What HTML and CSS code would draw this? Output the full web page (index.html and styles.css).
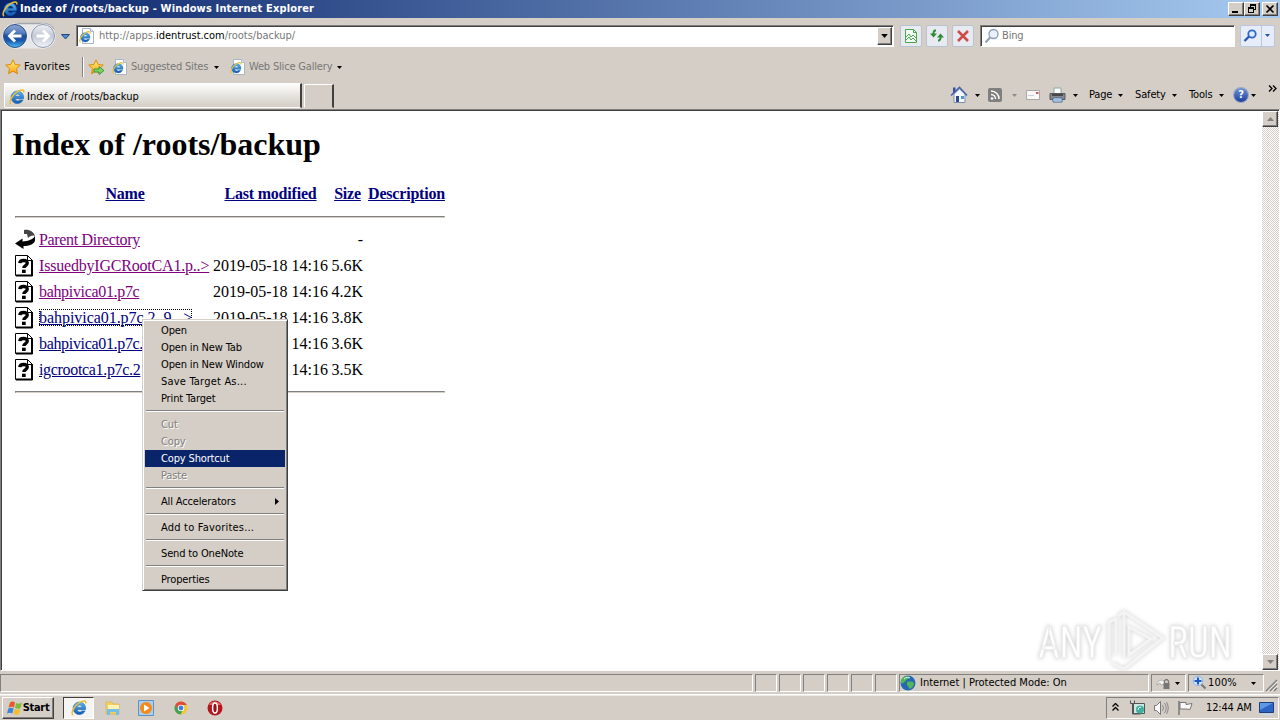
FILE: index.html
```html
<!DOCTYPE html>
<html>
  <head>
    <meta charset="UTF-8">
    <title>Index of /roots/backup</title>
    <link rel="stylesheet" href="styles.css">
  </head>
  <body>
    <svg class="defs" width="0" height="0">
      <defs>
        <linearGradient id="blue" x1="0" y1="0" x2="0" y2="1"><stop offset="0" stop-color="#5fb8f0"/><stop offset="1" stop-color="#0f56b4"/></linearGradient>
        <linearGradient id="ball" x1="0" y1="0" x2="0" y2="1"><stop offset="0" stop-color="#8fa6d0"/><stop offset=".35" stop-color="#5a80c0"/><stop offset=".5" stop-color="#1d4c9c"/><stop offset=".7" stop-color="#1a57ae"/><stop offset="1" stop-color="#4cc0f4"/></linearGradient>
        <linearGradient id="pale" x1="0" y1="0" x2="0" y2="1"><stop offset="0" stop-color="#eef0f5"/><stop offset=".5" stop-color="#c3c9d6"/><stop offset="1" stop-color="#f2f5fa"/></linearGradient>
        <linearGradient id="gold" x1="0" y1="0" x2="0" y2="1"><stop offset="0" stop-color="#fff27a"/><stop offset="1" stop-color="#f5a316"/></linearGradient>
      </defs>
      <symbol id="ie" viewBox="0 0 16 16">
        <path d="M14.500 9.700H6a2.700 2.700 0 0 0 4.800 1.200h3.300A6.300 6.300 0 1 1 14.500 9.700zM6 7.200h5.200a2.650 2.650 0 0 0-5.200 0z" fill="url(#blue)" stroke="#1560ad" stroke-width=".5"/>
        <path d="M2 15.200C-.6 13 3 6 8.500 2.600c4-2.500 6.800-2.300 6.300.9" fill="none" stroke="#e9bf35" stroke-width="1.500"/>
      </symbol>
      <symbol id="iepage" viewBox="0 0 16 16">
        <path d="M3.500.5h8l3 3v12h-11z" fill="#fff" stroke="#a9b4c4"/>
        <path d="M11.500.5v3h3" fill="#e8edf5" stroke="#a9b4c4"/>
        <use href="#ie" x="0" y="3" width="12" height="12"/>
      </symbol>
      <symbol id="star" viewBox="0 0 16 16">
        <path d="M8 .8l2.200 4.700 5.100.6-3.800 3.500 1 5.100L8 12.200l-4.500 2.500 1-5.100L.7 6.100l5.100-.6z" fill="url(#gold)" stroke="#d98a14"/>
      </symbol>
      <symbol id="arr" viewBox="0 0 5 3"><path d="M0 0h5L2.500 3z" fill="currentColor"/></symbol>
      <symbol id="unknown" viewBox="0 0 20 22">
        <path d="M.5.500h12l5 5v15H.5z" fill="#fff" stroke="#000"/>
        <path d="M12.500.500v5h5" fill="none" stroke="#000"/>
        <path d="M17 5.500v15.500M1 20.500h16.500" stroke="#000" stroke-width="2"/>
        <path d="M4.800 8.200C5 4.700 12.300 4.500 12.300 8.100c0 2.600-3.500 2.300-3.500 5" fill="none" stroke="#000" stroke-width="3.300"/>
        <path d="M7 14.700h3.700V18H7z"/>
      </symbol>
    </svg>

    <div class="titlebar">
      <svg class="i16"><use href="#ie"/></svg>
      <h1 class="caption">Index of /roots/backup - Windows Internet Explorer</h1>
      <div class="winbtns">
        <button><svg width="12" height="10"><path d="M2 7h6v2H2z"/></svg></button>
        <button><svg width="12" height="10"><path d="M4 0h6v6H8V5h1V2H5v1H4zM2 3h6v6H2zM3 5v3h4V5z" fill-rule="evenodd"/></svg></button>
        <button class="gap"><svg width="12" height="10"><path d="M2.500 1.500l7 7M9.500 1.500l-7 7" stroke="#000" stroke-width="1.700"/></svg></button>
      </div>
    </div>

    <div class="navbar">
      <svg class="travel" width="74" height="30" viewBox="0 0 74 30">
        <path d="M15 2.500h28q9 1 12 8v9q-5 8-12 8H15z" fill="#e9e8e8"/>
        <path d="M15 2.500h28q8 .5 11 6" fill="none" stroke="#a3a6b0" stroke-width="1.500"/>
        <circle cx="15" cy="15" r="12.500" fill="#f4f6fa"/><circle cx="15" cy="15" r="11.500" fill="url(#ball)" stroke="#314f86"/>
        <path d="M21.500 15H10M15 9.500L9.500 15l5.500 5.500" fill="none" stroke="#fff" stroke-width="2.800"/>
        <circle cx="43" cy="15" r="12.500" fill="#f4f6fa"/><circle cx="43" cy="15" r="11.500" fill="url(#pale)" stroke="#8f98aa"/>
        <path d="M36.500 15H48M43 9.500l5.500 5.500-5.500 5.500" fill="none" stroke="#fff" stroke-width="2.800"/>
        <path d="M61.500 13.500h8l-4 4.500z" fill="#4b8fd0" stroke="#1d4b80"/>
      </svg>
      <div class="address">
        <svg class="i16"><use href="#iepage"/></svg>
        <span class="url">http://apps.<b>identrust.com</b>/roots/backup/</span>
        <button class="drop"><svg width="7" height="4"><use href="#arr"/></svg></button>
      </div>
      <button class="tool"><svg width="16" height="16"><path d="M2.500 1.500h8l3 3v10h-11z" fill="#f2fbf2" stroke="#4ba552"/><path d="M10.500 1.500v3h3M3 9l3-3 2 3 2-2 3 3M3 12l3-3 2 3 2-2 3 3" fill="none" stroke="#4ba552"/></svg></button>
      <button class="tool"><svg width="16" height="16"><path d="M7 2.500H6Q4.500 3 4.500 5v1M9 12.500h1q1.500-.5 1.500-2.500v-1" fill="none" stroke="#2d8a35" stroke-width="2"/><path d="M1 5.500h7l-3.500 4zM8 9.500h7l-3.500-4z" fill="#2d8a35"/></svg></button>
      <button class="tool"><svg width="16" height="16"><path d="M3 3l10 10M13 3L3 13" stroke="#cf4a48" stroke-width="2.600"/></svg></button>
      <div class="search">
        <svg width="16" height="16"><circle cx="9.500" cy="6" r="4.500" fill="#e9f2fb" stroke="#8c9cb4" stroke-width="1.300"/><path d="M6 9.500L1.500 14.500" stroke="#8c9cb4" stroke-width="2"/></svg>
        <span>Bing</span>
      </div>
      <div class="go">
        <svg width="20" height="18"><circle cx="11" cy="7" r="3.700" fill="#dcebff" stroke="#2e67cb" stroke-width="1.800"/><path d="M8 9.500L3.500 14" stroke="#2454b4" stroke-width="2.300"/></svg>
        <i></i>
        <svg class="arr blue"><use href="#arr"/></svg>
      </div>
    </div>

    <div class="favbar">
      <svg class="i16"><use href="#star"/></svg>
      <span class="fav">Favorites</span>
      <i class="vline"></i>
      <svg class="i16 addfav"><use href="#star"/><path d="M6 10h5V7.500l5 4-5 4V13H6z" fill="#7bd45f" stroke="#2f8a2a" stroke-width=".8"/></svg>
      <svg class="i16"><use href="#iepage"/></svg>
      <span class="gray sites">Suggested Sites</span>
      <svg class="arr"><use href="#arr"/></svg>
      <svg class="i16 slice"><use href="#iepage"/></svg>
      <span class="gray">Web Slice Gallery</span>
      <svg class="arr last"><use href="#arr"/></svg>
    </div>

    <div class="tabrow">
      <div class="tab"><svg class="i16"><use href="#ie"/></svg><span>Index of /roots/backup</span></div>
      <div class="newtab"></div>
      <div class="commands">
        <svg width="18" height="18"><path d="M4 8v8.500h11V8L9.500 3z" fill="#f4f7fb" stroke="#7c8fb5"/><path d="M1 9.500L9.500 1.500 17 9.500" fill="none" stroke="#4a64a8" stroke-width="1.600"/><path d="M3 1.500h2.500v3.500L3 7z" fill="#3d4ea8"/><path d="M6 10h3v6H6z" fill="#294b88"/><path d="M11 10h3v3h-3z" fill="#4d9bd6"/></svg>
        <svg class="arr a1"><use href="#arr"/></svg>
        <svg class="rss" width="14" height="14"><rect width="14" height="14" rx="2" fill="#7f7f7f"/><circle cx="4" cy="10.500" r="1.300" fill="#fff"/><path d="M3 6.500a4.500 4.500 0 0 1 4.500 4.500M3 3a8 8 0 0 1 8 8" fill="none" stroke="#fff" stroke-width="1.500"/></svg>
        <svg class="arr a2"><use href="#arr"/></svg>
        <svg class="mail" width="14" height="10"><path d="M.5.500h13v9H.5z" fill="#f8f8f8" stroke="#a8a8a8"/><path d="M10 2h2.500v2H10z" fill="#c85a5a"/><path d="M2 5.500h6" stroke="#c8cede"/></svg>
        <svg class="printer" width="17" height="16"><path d="M5 1h7v6H5z" fill="#fff" stroke="#8aa"/><path d="M1 6.500h15v6H1z" fill="#85898e" stroke="#55595e"/><path d="M3 8h11" stroke="#333" stroke-width="1.500"/><path d="M4 11h9v4H4z" fill="#f5f8fc" stroke="#3f6a94"/><path d="M5 13h7" stroke="#4a8ac4"/></svg>
        <svg class="arr a3"><use href="#arr"/></svg>
        <span class="page">Page</span><svg class="arr a4"><use href="#arr"/></svg>
        <span class="safety">Safety</span><svg class="arr a5"><use href="#arr"/></svg>
        <span class="tools">Tools</span><svg class="arr a6"><use href="#arr"/></svg>
        <span class="help">?</span><svg class="arr a7"><use href="#arr"/></svg>
        <svg class="more" width="9" height="7"><path d="M1 .5l3 3-3 3M5 .5l3 3-3 3" fill="none" stroke="#000" stroke-width="1.300"/></svg>
      </div>
    </div>

    <div class="view">
      <div class="doc">
        <h1>Index of /roots/backup</h1>
        <table>
          <colgroup><col class="c-icon"><col class="c-name"><col class="c-date"><col class="c-size"><col class="c-desc"></colgroup>
          <tr class="head"><th></th><th><a href="#">Name</a></th><th><a href="#">Last modified</a></th><th><a href="#">Size</a></th><th><a href="#">Description</a></th></tr>
          <tr class="rule"><td colspan="5"><hr></td></tr>
          <tr><td><svg width="20" height="22"><path d="M9 1c5-1 10 2 11 6-3-1-5 0-7 2l-1-4H9z" fill="#444"/><path d="M20 6.500v5c-1 4-6 5.500-11.500 5.500v3L0 14.500 7.500 9.500v3C13 12 19 10.500 20 6.500z"/></svg></td><td><a class="seen" href="#">Parent Directory</a></td><td></td><td>-</td><td></td></tr>
          <tr><td><svg width="20" height="22"><use href="#unknown"/></svg></td><td><a class="seen long" href="#">IssuedbyIGCRootCA1.p..&gt;</a></td><td>2019-05-18 14:16</td><td>5.6K</td><td></td></tr>
          <tr><td><svg width="20" height="22"><use href="#unknown"/></svg></td><td><a class="seen" href="#">bahpivica01.p7c</a></td><td>2019-05-18 14:16</td><td>4.2K</td><td></td></tr>
          <tr><td><svg width="20" height="22"><use href="#unknown"/></svg></td><td><a class="focus" href="#">bahpivica01.p7c.2_9...&gt;</a></td><td>2019-05-18 14:16</td><td>3.8K</td><td></td></tr>
          <tr><td><svg width="20" height="22"><use href="#unknown"/></svg></td><td><a href="#">bahpivica01.p7c.</a></td><td>2019-05-18 14:16</td><td>3.6K</td><td></td></tr>
          <tr><td><svg width="20" height="22"><use href="#unknown"/></svg></td><td><a href="#">igcrootca1.p7c.2</a></td><td>2019-05-18 14:16</td><td>3.5K</td><td></td></tr>
          <tr class="rule bottom"><td colspan="5"><hr></td></tr>
        </table>
      </div>
      <div class="scroll">
        <button><svg width="7" height="4"><path d="M0 4h7L3.500 0z" fill="#808080"/></svg></button>
        <button><svg width="7" height="4"><path d="M0 0h7L3.500 4z" fill="#808080"/></svg></button>
      </div>
    </div>

    <div class="status">
      <div class="cell text"></div>
      <div class="cell"></div><div class="cell"></div><div class="cell"></div><div class="cell"></div><div class="cell"></div><div class="cell"></div>
      <div class="cell zone">
        <svg width="16" height="16"><circle cx="8" cy="8" r="7.500" fill="#2767b5"/><path d="M3 2.500c3-2 6-1 7 0-1 2-3 1-4 3S2 8 1 9c-.5-3 .5-5 2-6.500zM7 7c4-1 6 0 7 1 0 3-2 5-4 6-2-1-1-3-3-4z" fill="#4fb855"/><path d="M4 4c2-2 5-2 6-1" stroke="#d6f0ff" fill="none"/></svg>
        <span>Internet | Protected Mode: On</span>
      </div>
      <div class="cell lock">
        <svg width="17" height="16"><path d="M2 10c0-4 4-6 7-4l1 3-4 1-1-2z" fill="#f4f4f4" stroke="#999" stroke-width=".7"/><path d="M8.500 8h6v6h-6z" fill="#777"/><path d="M9.500 8V6q2-3 4 0v2" fill="none" stroke="#777" stroke-width="1.300"/></svg>
        <svg class="arr"><use href="#arr"/></svg>
      </div>
      <div class="cell zoom">
        <svg width="16" height="16"><circle cx="6" cy="6" r="4.700" fill="#d5e8ff" stroke="#8fb4e6"/><path d="M6 2.500v7M2.500 6h7" stroke="#1e58c4" stroke-width="2.200"/><path d="M9.500 9.500l4 4" stroke="#777" stroke-width="2.200"/></svg>
        <span>100%</span>
        <svg class="arr"><use href="#arr"/></svg>
      </div>
      <svg class="grip" width="13" height="14"><path d="M1 13L12 2M5 13l7-7M9 13l3-3" stroke="#808080" stroke-width="1.500"/><path d="M2.500 13.500L13 3M6.500 13.500L13 7" stroke="#fff" stroke-width=".7"/></svg>
    </div>

    <div class="taskbar">
      <button class="start">
        <svg width="16" height="16"><path d="M3 2.500c2-1.500 3.500-1 5 0L7 7.500c-2-1-3.500-1-5.500.2z" fill="#e8582c"/><path d="M9 3c2 1 4 .8 6-.5l-1.500 5.500c-2 1.200-3.500 1-5.500 0z" fill="#7dbb3c"/><path d="M1.200 8.800c2-1.400 3.500-1 5.400-.2l-1.300 5c-2-1-3.500-1-5.300.2z" fill="#3a86d4"/><path d="M7.700 9c2 1 3.600 1 5.600 0L12 14c-2 1.200-3.700 1-5.600 0z" fill="#f4bd2b"/></svg>
        <span>Start</span>
      </button>
      <div class="task active"><svg width="16" height="16"><use href="#ie"/></svg></div>
      <div class="task"><svg width="16" height="16"><path d="M1 2h6l1 2h6v10H1z" fill="#f0cf64" stroke="#d9b04a" stroke-width=".7"/><path d="M3 5h11v4H3z" fill="#fdf2b4"/><path d="M2 15V9h12v6h-3v-3H5v3z" fill="#74bfe8"/></svg></div>
      <div class="task"><svg width="17" height="17"><path d="M.5.500h15v15H.5z" fill="#a9cfec" stroke="#5c93c4"/><circle cx="8" cy="8" r="6" fill="#f58a1b"/><path d="M6 4.500v7L11.500 8z" fill="#fff"/></svg></div>
      <div class="task"><svg width="14" height="14"><circle cx="7" cy="7" r="6.500" fill="#f3c92f"/><path d="M1.200 4A6.500 6.500 0 0 1 12.800 4H7L4 8z" fill="#dd4b3b"/><path d="M1.200 4A6.500 6.500 0 0 0 6.500 13.500L9 9H5z" fill="#3fa257"/><circle cx="7" cy="7" r="3.200" fill="#fff"/><circle cx="7" cy="7" r="2.400" fill="#3f7de0"/></svg></div>
      <div class="task"><svg width="16" height="16"><circle cx="8" cy="8" r="7.500" fill="#b3161c"/><path d="M2 5a7 7 0 0 1 12 0z" fill="#e0686a"/><ellipse cx="8" cy="8" rx="2.400" ry="5" fill="#a80d12" stroke="#fff" stroke-width="1.500"/></svg></div>
      <div class="tray">
        <svg class="up" width="7" height="8"><path d="M.5 3.500l3-3 3 3M.5 7.500l3-3 3 3" fill="none" stroke="#000" stroke-width="1.300"/></svg>
        <svg class="net" width="17" height="16"><path d="M4.500 3.500h11v10h-11z" fill="#cfe8e4" stroke="#555"/><path d="M1.500.5v3h4v-3M3.500 3.500V14h8" fill="none" stroke="#555"/><circle cx="11" cy="9.500" r="4" fill="#3fb0a0"/><path d="M9 10q0-3 3-3" stroke="#e8fff8" fill="none"/></svg>
        <svg class="vol" width="16" height="16"><path d="M1.500 5.500h2l4-4v13l-4-4h-2z" fill="#fafafa" stroke="#777"/><path d="M9.500 5q2 3 0 6M11.500 3q3.500 5 0 10M13.500 2q3.500 6 0 12" fill="none" stroke="#888"/></svg>
        <svg class="flag" width="17" height="16"><path d="M2 1v14" stroke="#777" stroke-width="1.500"/><path d="M3 2.500h6v2l6-1-2 6-4-.5H3z" fill="#fafafa" stroke="#777"/></svg>
        <span>12:44 AM</span>
        <svg class="desk" width="16" height="15"><path d="M.5 1.500h14v10H.5z" fill="#2c65c4" stroke="#1d3d80"/><path d="M1 2h13L1 9z" fill="#5e97e4"/><path d="M3 13.500h10" stroke="#c8d8ec" stroke-width="1.500"/></svg>
      </div>
    </div>

    <ul class="menu">
      <li>Open</li>
      <li>Open in New Tab</li>
      <li>Open in New Window</li>
      <li class="wide">Save Target As...</li>
      <li>Print Target</li>
      <li class="sep"></li>
      <li class="off">Cut</li>
      <li class="off">Copy</li>
      <li class="on">Copy Shortcut</li>
      <li class="off">Paste</li>
      <li class="sep"></li>
      <li class="sub">All Accelerators<svg width="4" height="7"><path d="M0 0v7l4-3.500z"/></svg></li>
      <li class="sep"></li>
      <li class="wide">Add to Favorites...</li>
      <li class="sep"></li>
      <li>Send to OneNote</li>
      <li class="sep"></li>
      <li>Properties</li>
    </ul>

    <svg class="watermark" width="210" height="70" viewBox="0 0 210 70">
      <g font-family="Roboto" font-size="45">
        <text x="4" y="52" textLength="64" lengthAdjust="spacingAndGlyphs">ANY</text>
        <text x="134" y="52" textLength="64" lengthAdjust="spacingAndGlyphs">RUN</text>
      </g>
      <path class="play" d="M75 54V16l7-3v36M90 52V6l39 26-39 31-12-6M90 6l-6 4M95 21l22 12-22 16z"/>
    </svg>
  </body>
</html>
```
FILE: styles.css
```css
* {
  box-sizing: border-box;
}

body {
  margin: 0;
  width: 1280px;
  height: 720px;
  overflow: hidden;
  position: relative;
  display: flex;
  flex-direction: column;
  background: #d5cec6;
  color: #000;
  font: 11px/14px "DejaVu Sans Condensed", "DejaVu Sans", sans-serif;
  font-stretch: condensed;
  letter-spacing: -0.15px;
  white-space: nowrap;
}

svg {
  flex: none;
  display: block;
}

.defs {
  position: absolute;
}

button {
  padding: 0;
  border: 1px solid;
  border-color: #fff #404040 #404040 #fff;
  box-shadow: inset -1px -1px #808080;
  background: #d5cec6;
  display: flex;
  align-items: center;
  justify-content: center;
  font: inherit;
  letter-spacing: inherit;
}

.i16 {
  width: 16px;
  height: 16px;
}

.arr {
  width: 5px;
  height: 3px;
}

/* title bar */
.titlebar {
  height: 18px;
  flex: none;
  display: flex;
  align-items: center;
  padding: 0 2px;
  background: linear-gradient(to right, #0a246a, #a6caf0);
}

.caption {
  margin: 0 0 0 2px;
  font-size: 11px;
  line-height: 18px;
  color: #fff;
  letter-spacing: 0.16px;
}

.winbtns {
  margin-left: auto;
  display: flex;
}

.winbtns button {
  width: 16px;
  height: 14px;
}

.winbtns .gap {
  margin-left: 2px;
}

/* address row */
.navbar {
  height: 35px;
  flex: none;
  display: flex;
  align-items: center;
  padding-right: 5px;
}

.travel {
  margin-right: 2px;
}

.address,
.search {
  height: 22px;
  border: 1px solid;
  border-color: #808080 #fff #fff #808080;
  box-shadow: inset 1px 1px #404040;
  background: #fff;
  display: flex;
  align-items: center;
  color: #777;
}

.address {
  width: 818px;
  padding: 1px 1px 1px 2px;
  margin-right: 6px;
}

.url {
  margin-left: 4px;
  letter-spacing: -0.02px;
}

.url b {
  font-weight: normal;
  color: #000;
}

.drop {
  margin-left: auto;
  width: 15px;
  height: 18px;
}

.tool {
  width: 22px;
  height: 22px;
  margin-right: 4px;
  border: 1px solid #b9c2d0;
  border-radius: 2px;
  box-shadow: none;
  background: #e7eaf0;
}

.search {
  width: 255px;
  margin-left: 2px;
  padding-left: 3px;
  gap: 2px;
}

.go {
  width: 35px;
  height: 22px;
  margin-left: auto;
  display: flex;
  align-items: center;
  border: 1px solid #b9c6dc;
  border-radius: 2px;
  background: #e6edf8;
}

.go i {
  width: 1px;
  height: 20px;
  background: #b9c6dc;
  margin-right: 3px;
}

.blue {
  color: #2454a4;
}

/* favorites row */
.favbar {
  height: 28px;
  flex: none;
  display: flex;
  align-items: center;
  padding-left: 5px;
}

.fav {
  width: 48px;
  margin: 0 10px 0 3px;
  letter-spacing: 0.15px;
}

.vline {
  width: 2px;
  height: 20px;
  margin-right: 4px;
  border-left: 1px solid #808080;
  border-right: 1px solid #fff;
}

.addfav {
  margin-right: 8px;
}

.gray {
  width: 83px;
  margin: 0 0 0 3px;
  color: #777;
  letter-spacing: -0.18px;
}

.sites {
  width: 80px;
}

.favbar .arr {
  margin-left: 3px;
}

.slice {
  margin-left: 11px;
}

.favbar .last {
  margin-left: 5px;
}

/* tabs and command bar */
.tabrow {
  height: 28px;
  flex: none;
  display: flex;
  align-items: flex-start;
  padding: 2px 0 0 4px;
}

.tab {
  width: 298px;
  height: 25px;
  padding: 2px 0 0 4px;
  border: 1px solid;
  border-color: #fff #404040 transparent #fff;
  border-right-width: 2px;
  background: linear-gradient(#fdfdfc, #e2dfda 60%, #d5cec6);
  display: flex;
  align-items: center;
  gap: 2px;
  letter-spacing: 0.07px;
}

.newtab {
  width: 30px;
  height: 24px;
  margin: 1px 0 0 2px;
  border: 1px solid;
  border-color: #fff #404040 transparent #fff;
  border-right-width: 2px;
}

.commands {
  width: 330px;
  height: 24px;
  margin-left: auto;
  display: flex;
  align-items: center;
}

.a1 {
  margin: 0 8px 0 7px;
}

.a2 {
  margin: 0 9px 0 10px;
  color: #8b8b8b;
}

.printer {
  margin-left: 9px;
}

.a3 {
  margin: 0 11px 0 7px;
}

.page {
  width: 25px;
}

.a4,
.a5,
.a6 {
  margin: 0 12px 0 4px;
}

.safety {
  width: 33px;
}

.tools {
  width: 26px;
}

.a6 {
  margin-right: 10px;
}

.help {
  width: 14px;
  height: 14px;
  border-radius: 7px;
  background: linear-gradient(#6f92d8, #1c3f9c);
  box-shadow: 0 0 0 1px #9aa8c8;
  color: #fff;
  font-weight: bold;
  text-align: center;
}

.a7 {
  margin: 0 12px 0 3px;
}

.more {
  margin-bottom: 13px;
}

/* page */
.view {
  height: 562px;
  flex: none;
  display: flex;
  border: 1px solid;
  border-color: #808080 #fff #fff #808080;
  box-shadow: inset 1px 1px #404040;
  background: #fff;
}

.doc {
  flex: 1;
  padding: 1px 0 0 11px;
  font: 16px/20px "Liberation Serif", "Times New Roman", serif;
  letter-spacing: 0;
}

.doc h1 {
  margin: 15px 0 19px;
  font-size: 32px;
  line-height: 36px;
}

.doc table {
  width: 433px;
  margin: 0 0 0 3px;
  table-layout: fixed;
  border-collapse: collapse;
}

.c-icon { width: 24px; }
.c-name { width: 172px; }
.c-date { width: 119px; }
.c-size { width: 35px; }
.c-desc { width: 83px; }

.doc tr {
  height: 26px;
}

.doc td,
.doc th {
  padding: 0;
}

.doc th {
  letter-spacing: -0.2px;
}

.doc td a {
  letter-spacing: -0.33px;
}

.doc td .long {
  letter-spacing: -0.2px;
}

.doc td .focus {
  letter-spacing: -0.05px;
}

.doc td:nth-child(3),
.doc td:nth-child(4) {
  text-align: right;
  padding-right: 2px;
}

.doc .rule {
  height: 20px;
}

.doc .bottom {
  height: 18px;
}

hr {
  width: 430px;
  height: 2px;
  margin: 0;
  border: 1px solid;
  border-color: #808080 #d4d0c8 #d4d0c8 #808080;
}

a {
  color: #000080;
}

.seen {
  color: #800080;
}

.focus {
  outline: 1px dotted #000;
  outline-offset: -1px;
}

.scroll {
  width: 17px;
  margin-top: 1px;
  display: flex;
  flex-direction: column;
  justify-content: space-between;
  background: repeating-conic-gradient(#d5cec6 0 25%, #fff 0 50%) 0 0 / 2px 2px;
}

.scroll button {
  width: 16px;
  height: 16px;
}

/* status bar */
.status {
  height: 24px;
  flex: none;
  display: flex;
  padding: 3px 0 2px;
  border-bottom: 1px solid #fff;
  gap: 2px;
}

.cell {
  width: 22px;
  height: 18px;
  border: 1px solid;
  border-color: #808080 #fff #fff #808080;
  display: flex;
  align-items: center;
}

.cell.text {
  width: 753px;
}

.cell.zone {
  width: 250px;
  gap: 4px;
  letter-spacing: 0;
}

.cell.lock {
  width: 35px;
  padding-left: 3px;
  gap: 3px;
}

.cell.zoom {
  width: 76px;
  padding-left: 3px;
}

.zoom span {
  letter-spacing: 0.15px;
}

.zoom .arr {
  margin-left: auto;
  margin-right: 7px;
}

.grip {
  margin: 4px 0 0 -1px;
}

/* taskbar */
.taskbar {
  flex: 1;
  display: flex;
  align-items: center;
  border-top: 1px solid #eceae6;
}

.start {
  width: 52px;
  height: 22px;
  margin: 0 9px 0 2px;
  font-weight: bold;
  letter-spacing: -0.3px;
  gap: 0;
}

.task {
  width: 31px;
  height: 22px;
  margin-right: 3px;
  display: flex;
  align-items: center;
  justify-content: center;
}

.active {
  border: 1px solid;
  border-color: #404040 #fff #fff #404040;
  background: #f5f4f2;
}

.tray {
  width: 173px;
  height: 22px;
  margin: 0 1px 0 auto;
  padding: 0 3px 0 5px;
  border: 1px solid;
  border-color: #808080 #fff #fff #808080;
  display: flex;
  align-items: center;
}

.up {
  margin-bottom: 3px;
}

.net {
  margin: 0 7px 0 10px;
}

.vol {
  margin-right: 8px;
}

.flag {
  margin-right: 12px;
}

.desk {
  margin-left: auto;
}

/* context menu */
.menu {
  position: absolute;
  left: 142px;
  top: 319px;
  width: 146px;
  height: 272px;
  margin: 0;
  padding: 2px;
  list-style: none;
  background: #d5cec6;
  border: 1px solid;
  border-color: #d4d0c8 #404040 #404040 #d4d0c8;
  box-shadow: inset 1px 1px #fff, inset -1px -1px #808080;
}

.menu li {
  height: 17px;
  line-height: 17px;
  padding-left: 16px;
}

.menu .wide {
  letter-spacing: 0.2px;
}

.menu .sep {
  height: 2px;
  margin: 3px 1px 4px;
  padding: 0;
  border-top: 1px solid #808080;
  border-bottom: 1px solid #fff;
}

.menu .off {
  color: #808080;
  text-shadow: 1px 1px #fff;
}

.menu .on {
  background: #0a246a;
  color: #fff;
}

.menu .sub {
  display: flex;
  align-items: center;
  justify-content: space-between;
  padding-right: 6px;
}

.watermark {
  position: absolute;
  left: 1034px;
  top: 606px;
  fill: #fff;
  stroke: #ececec;
  stroke-width: 1;
  filter: drop-shadow(0 0 2px #ccc);
}

.play {
  fill: none;
  stroke: #f4f4f4;
  stroke-width: 3;
}
```
